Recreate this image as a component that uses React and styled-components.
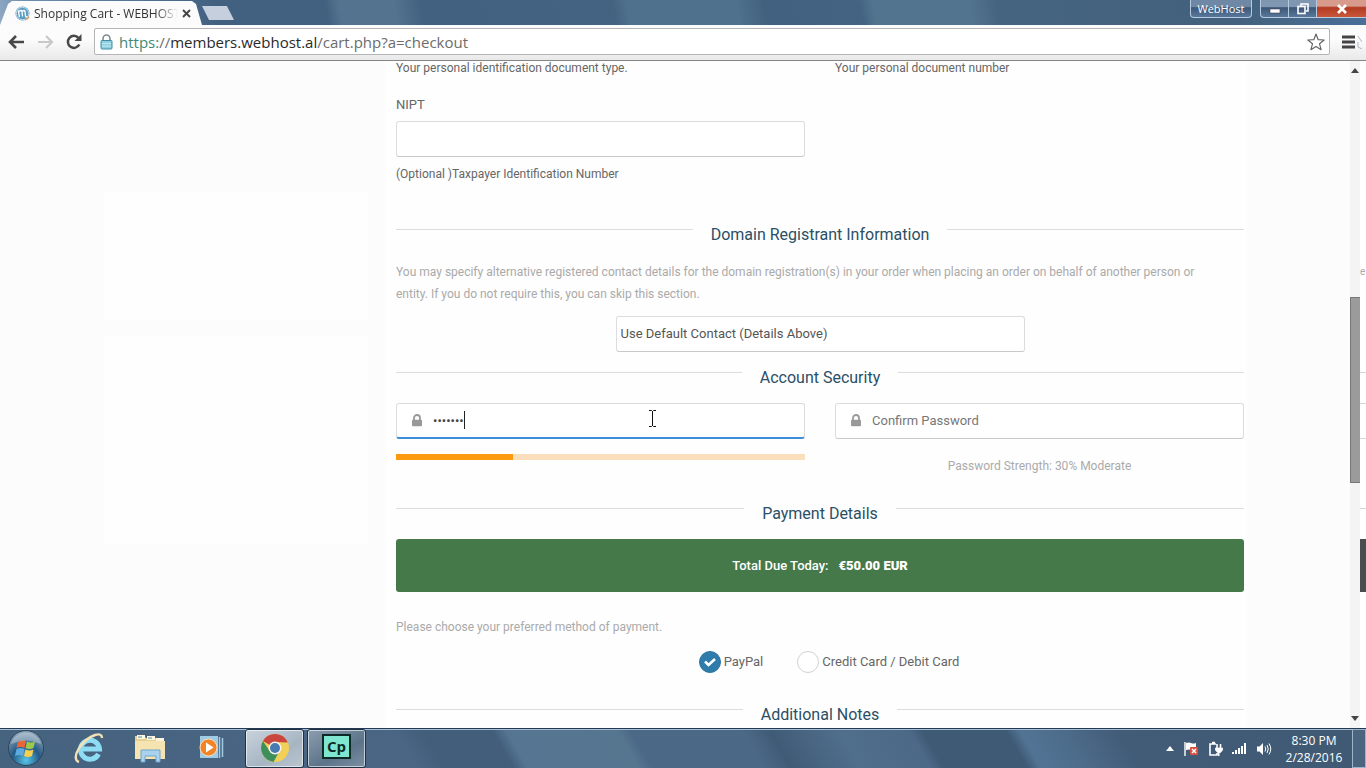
import React, { useState } from 'react';
import styled, { createGlobalStyle } from 'styled-components';

const GlobalStyle = createGlobalStyle`
  * {
    box-sizing: border-box;
  }
  body {
    margin: 0;
    background: #fcfcfc;
    font-family: Roboto, sans-serif;
    color: #666;
  }
  button, input, select {
    font-family: inherit;
  }
`

const Screen = styled.div`
  height: 100vh;
  display: flex;
  flex-direction: column;
  overflow: hidden;
`

/* browser frame */

const TitleBar = styled.div`
  height: 25px;
  flex: none;
  display: flex;
  align-items: flex-end;
  background: linear-gradient(80deg, #8fa9c4 0, #6f8fb0 2%, #426180 16%, #426180 24%, #53738f 25%, #53738f 29%, #426180 31%, #446382 45%, #4f718d 46%, #4f718d 54%, #426180 56%, #446382 63%, #53748f 64%, #53748f 71%, #45647f 73%, #43617d 90%, #4a7099 100%);
`

const Tab = styled.div`
  width: 202px;
  height: 24px;
  padding: 0 11px 0 15px;
  display: flex;
  align-items: center;
  gap: 4px;
  background: #fbfbfc;
  clip-path: polygon(0 100%, 8px 3px, 12px 0, 192px 0, 196px 3px, 100% 100%);
  font-family: 'Open Sans', sans-serif;
  font-size: 12px;
  color: #333;
`

const TabTitle = styled.span`
  flex: 1;
  min-width: 0;
  white-space: nowrap;
  mask-image: linear-gradient(90deg, #000 85%, transparent);
`

const PlainButton = styled.button`
  border: none;
  background: none;
  padding: 0;
  display: flex;
  align-items: center;
  justify-content: center;
  cursor: pointer;
`

const NewTab = styled(PlainButton)`
  width: 32px;
  height: 14px;
  margin-bottom: 5px;
  background: #c6cfde;
  clip-path: polygon(0 0, 78% 0, 100% 100%, 22% 100%);
`

const WindowButtons = styled.div`
  margin-left: auto;
  align-self: flex-start;
  display: flex;
`

const UserButton = styled(PlainButton)`
  width: 62px;
  height: 18px;
  margin-right: 8px;
  border: 1px solid #b7cbe0;
  border-top: none;
  border-radius: 0 0 4px 4px;
  background: linear-gradient(#6f88a5 40%, #3d5878 45%, #58779b);
  color: #fff;
  font-family: 'Open Sans', sans-serif;
  font-size: 11px;
`

const WindowButton = styled(PlainButton)`
  width: ${p => p.$close ? 50 : 28}px;
  height: 18px;
  border: 1px solid #b7cbe0;
  border-width: 0 0 1px 1px;
  border-radius: ${p => p.$first ? '0 0 0 4px' : 0};
  background: ${p => p.$close
    ? 'linear-gradient(#d79a8b 35%, #b23b22 45%, #c9583b)'
    : 'linear-gradient(#8097b1 40%, #3d5878 45%, #58779b)'};
`

const Toolbar = styled.div`
  height: 36px;
  flex: none;
  padding: 0 4px 2px 8px;
  display: flex;
  align-items: center;
  gap: 12px;
  background: linear-gradient(#fcfcfd 40%, #e9e9ea);
  border-bottom: 1px solid #858585;
`

const AddressBar = styled.div`
  flex: 1;
  height: 27px;
  padding: 0 4px 0 5px;
  display: flex;
  align-items: center;
  gap: 6px;
  background: #fff;
  border: 1px solid #b5b5b5;
  border-radius: 2px;
`

const Url = styled.a`
  flex: 1;
  font-family: 'Open Sans', sans-serif;
  font-size: 15px;
  color: #6c6c6c;
  text-decoration: none;

  span {
    color: #3d8a78;
  }
  b {
    font-weight: 400;
    color: #2a2a2a;
  }
`

/* page */

const Viewport = styled.div`
  flex: 1;
  min-height: 0;
  display: flex;
`

const Page = styled.div`
  flex: 1;
  display: grid;
  grid-template-columns: 264px minmax(0, 1fr);
  column-gap: 17px;
  padding: 0 103px 0 104px;
  overflow: hidden;
`

const Sidebar = styled.aside`
  padding-top: 131px;
  display: flex;
  flex-direction: column;
  gap: 16px;
`

const SidePanel = styled.div`
  height: ${p => p.$tall ? 208 : 128}px;
  background: #fefefe;
`

const Main = styled.main`
  padding: 0 3px 0 11px;
  background: #fefefe;
`

const Columns = styled.div`
  display: grid;
  grid-template-columns: 1fr 1fr;
  column-gap: 30px;
`

const Hint = styled.div`
  font-size: 12px;
  line-height: 14px;
`

const FieldGroup = styled.div`
  padding: 20px 0 41px;

  label {
    display: block;
    margin-bottom: 6px;
    font-size: 13px;
    line-height: 20px;
  }
  ${Hint} {
    margin-top: 10px;
  }
`

const TextInput = styled.input`
  display: block;
  width: 100%;
  height: 36px;
  border: 1px solid #dcdcdc;
  border-bottom-color: #c8c8c8;
  border-radius: 3px;
  background: #fff;
`

const SectionTitle = styled.h2`
  margin: 0;
  height: 24px;
  display: flex;
  gap: 18px;
  font-size: 16px;
  line-height: 26px;
  font-weight: 400;
  color: #2b4f66;

  &::before, &::after {
    content: '';
    flex: 1;
    height: 1px;
    margin-top: 7px;
    background: #dcdcdc;
  }
`

const Text = styled.p`
  margin: ${p => p.$top}px 0 0;
  padding-right: 20px;
  font-size: 12px;
  line-height: 22px;
  color: #aaa;
`

const ContactSelect = styled.select`
  display: block;
  width: calc(50% - 15px);
  height: 36px;
  margin: 11px auto 13px;
  padding: 0 4px 2px;
  appearance: none;
  border: 1px solid #dcdcdc;
  border-bottom-color: #c8c8c8;
  border-radius: 3px;
  background: #fff;
  color: #555;
  font-size: 13px;
`

const PasswordField = styled.label`
  height: 36px;
  padding: 0 14px 1px;
  display: flex;
  align-items: center;
  background: #fff;
  border: 1px solid #dcdcdc;
  border-bottom: ${p => p.$active ? '2px solid #3b8fd6' : '1px solid #c8c8c8'};
  border-radius: 3px;

  input {
    flex: ${p => p.$active ? 'none' : 1};
    field-sizing: content;
    min-width: 0;
    margin-left: 10px;
    padding: 0;
    border: none;
    outline: none;
    background: none;
    color: #444;
    font-size: 13px;
  }
  input::placeholder {
    color: #777;
  }
`

const Caret = styled.span`
  width: 1px;
  height: 18px;
  background: #222;
`

const Security = styled(Columns)`
  padding: 14px 0 27px;
`

const Meter = styled.div`
  height: 6px;
  margin-top: 15px;
  background: #fbdfbd;
`

const MeterFill = styled.div`
  height: 100%;
  background: #fc9a12;
`

const Strength = styled.div`
  margin-top: 19px;
  font-size: 12px;
  line-height: 16px;
  text-align: center;
  color: #aaa;
`

const Total = styled.div`
  height: 53px;
  margin-top: 14px;
  display: flex;
  align-items: center;
  justify-content: center;
  gap: 10px;
  background: #46794a;
  border-radius: 3px;
  color: #fff;
  font-size: 13px;
  font-weight: 500;

  strong {
    font-weight: 900;
  }
`

const Methods = styled.div`
  padding: 13px 0 29px 18px;
  display: flex;
  justify-content: center;
  gap: 34px;
`

const Method = styled.label`
  display: flex;
  align-items: center;
  gap: 3px;
  font-size: 13px;
  line-height: 22px;
`

const Radio = styled.input`
  appearance: none;
  width: 22px;
  height: 22px;
  margin: 0;
  border: 1px solid #d2d2d2;
  border-radius: 50%;
  background: #fff;

  &:checked {
    border-color: #2b76a3;
    background: #2f7cab url("data:image/svg+xml,%3Csvg xmlns='http://www.w3.org/2000/svg' viewBox='0 0 20 20'%3E%3Cpath d='M5 9.500l3.500 3.500 6.500-6' fill='none' stroke='white' stroke-width='2.600'/%3E%3C/svg%3E") center / 20px;
  }
`

const ScrollTrack = styled.div`
  width: 10px;
  display: flex;
  flex-direction: column;
  align-items: center;
  background: #f4f4f4;
`

const ScrollButton = styled(PlainButton)`
  height: 19px;
`

const ScrollThumb = styled.div`
  width: 10px;
  height: 186px;
  margin: 217px 0 auto;
  background: #9b9b9b;
  border: 1px solid #777;
  border-right: none;
`

const Edge = styled.div`
  width: 6px;
  padding-top: 203px;
  background: #fff;
`

const EdgeMark = styled.div`
  font-size: 10px;
  line-height: 16px;
  color: #aaa;
`

const EdgeBox = styled.div`
  height: ${p => p.$height}px;
  margin-top: ${p => p.$top || 0}px;
  border: solid #d6d6d6;
  border-width: 1px 0;
  ${p => p.$dark && 'background: #4a4d50; border-color: #4a4d50;'}
`

const EdgeLine = styled.div`
  height: 1px;
  margin-top: ${p => p.$top}px;
  background: #d6d6d6;
`

/* taskbar */

const Taskbar = styled.div`
  height: 40px;
  flex: none;
  display: flex;
  background: linear-gradient(60deg, #45627f 0, #4a6684 30%, #425e7a 32%, #425e7a 37%, #557592 38%, #56758f 46%, #4b6987 47%, #4b6987 55%, #405b76 57%, #506f8c 62%, #4c6988 67%, #3f5a75 68%, #3f5a75 74%, #527494 75%, #4d6c8b 78%, #425c78 82%, #405a74 100%);
  border-top: 1px solid #243a52;
  box-shadow: inset 0 1px #a9c1d8;
`

const AppButton = styled(PlainButton)`
  width: ${p => p.$width}px;
  padding-bottom: 2px;
  ${p => p.$active && `
    width: 59px;
    margin-right: 3px;
    border: 1px solid #1f3144;
    border-radius: 3px;
    box-shadow: inset 0 0 0 1px #ffffff99;
    background: ${p.$active};
  `}
`

const Tray = styled.div`
  margin-left: auto;
  padding-right: 4px;
  display: flex;
  align-items: center;
  gap: 9px;
`

const Clock = styled.time`
  width: 76px;
  align-self: center;
  text-align: center;
  color: #fff;
  font-family: 'Open Sans', sans-serif;
  font-size: 12px;
  line-height: 17px;
`

const ShowDesktop = styled(PlainButton)`
  width: 14px;
  height: 39px;
  border: 1px solid #9fb4c8;
  background: #4b6580;
`

const LockIcon = () => (
  <svg width="12" height="13" viewBox="0 0 12 13">
    <path d="M3 6V4a3 3 0 0 1 6 0v2" fill="none" stroke="#999" strokeWidth="1.8" />
    <rect x="1" y="5.800" width="10" height="6.500" rx="1" fill="#999" />
  </svg>
)

const Holder = styled.div`
  position: relative;
`

const TextCursor = styled.svg`
  position: absolute;
  left: 252px;
  top: 7px;
`

const Browser = () => (
  <>
    <TitleBar>
      <Tab>
        <svg width="15" height="15" viewBox="0 0 15 15">
          <circle cx="7.500" cy="7.500" r="7" fill="#5c9bc2" />
          <circle cx="7.500" cy="7.500" r="6.200" fill="none" stroke="#dbe9f2" strokeWidth="0.800" />
          <path d="M3.200 4.500L4.500 11M4 5.500q2.500-2 3 0L7.500 10.500M7 5.500q2.500-2 3 0L10.500 10q.5 1.500 2 .5" fill="none" stroke="#fff" strokeWidth="1.300" />
          <path d="M10 13.800q3-.5 4-3" fill="none" stroke="#dd9a55" strokeWidth="1.400" />
        </svg>
        <TabTitle>Shopping Cart - WEBHOST</TabTitle>
        <PlainButton aria-label="Close tab">
          <svg width="9" height="9" viewBox="0 0 9 9">
            <path d="M1 1l7 7M8 1L1 8" stroke="#444" strokeWidth="1.900" />
          </svg>
        </PlainButton>
      </Tab>
      <NewTab aria-label="New tab" />
      <WindowButtons>
        <UserButton>WebHost</UserButton>
        <WindowButton $first aria-label="Minimize">
          <svg width="12" height="12"><rect x="1" y="6" width="10" height="4" fill="#fff" stroke="#445" strokeWidth="0.600" /></svg>
        </WindowButton>
        <WindowButton aria-label="Restore">
          <svg width="12" height="12" viewBox="0 0 12 12" fill="none" stroke="#fff" strokeWidth="1.600">
            <path d="M4 3V1h7v7H9" />
            <rect x="1" y="3.500" width="7" height="7" />
          </svg>
        </WindowButton>
        <WindowButton $close aria-label="Close">
          <svg width="12" height="10" viewBox="0 0 12 10">
            <path d="M2 1l8 8M10 1L2 9" stroke="#fff" strokeWidth="2.600" />
          </svg>
        </WindowButton>
      </WindowButtons>
    </TitleBar>
    <Toolbar>
      <PlainButton aria-label="Back">
        <svg width="17" height="14" viewBox="0 0 17 14" fill="none" stroke="#484848" strokeWidth="2.600">
          <path d="M8 1L2 7l6 6M2 7h14" />
        </svg>
      </PlainButton>
      <PlainButton aria-label="Forward">
        <svg width="17" height="14" viewBox="0 0 17 14" fill="none" stroke="#c9c9c9" strokeWidth="2.200">
          <path d="M9 1l6 6-6 6M15 7H1" />
        </svg>
      </PlainButton>
      <PlainButton aria-label="Reload">
        <svg width="16" height="16" viewBox="0 0 16 16">
          <path d="M13.300 10.500A6 6 0 1 1 12.500 4" fill="none" stroke="#484848" strokeWidth="2.500" />
          <path d="M15.500 0v7H8.500z" fill="#484848" />
        </svg>
      </PlainButton>
      <AddressBar>
        <svg width="13" height="16" viewBox="0 0 13 16">
          <path d="M3 7V4.500a3.500 3.500 0 0 1 7 0V7" fill="none" stroke="#7d8b90" strokeWidth="1.600" />
          <rect x="1" y="6.500" width="11" height="8.500" rx="1" fill="#8fd0e0" stroke="#3f8ea5" />
          <path d="M2 9.500h9M2 12h9" stroke="#bfe8f0" />
        </svg>
        <Url href="#checkout"><span>https:</span>//<b>members.webhost.al</b>/cart.php?a=checkout</Url>
        <PlainButton aria-label="Bookmark">
          <svg width="18" height="18" viewBox="0 0 18 18">
            <path d="M9 1l2.200 5.700 6 .3-4.700 3.800 1.600 5.900L9 13.400l-5.100 3.300 1.600-5.900L.8 7l6-.3z" fill="#fff" stroke="#666" strokeWidth="1.200" strokeLinejoin="round" />
          </svg>
        </PlainButton>
      </AddressBar>
      <PlainButton aria-label="Menu">
        <svg width="20" height="14" viewBox="0 0 20 14">
          <path d="M0 2h13M0 7h13M0 12h13" stroke="#444" strokeWidth="3" />
          <path d="M16 1l4 6M16 7v5l4 2" fill="none" stroke="#9aa7b5" strokeWidth="0.800" />
        </svg>
      </PlainButton>
    </Toolbar>
  </>
)

const WindowsTaskbar = () => (
  <Taskbar>
    <AppButton $width={52} aria-label="Start">
      <svg width="38" height="38" viewBox="0 0 38 38">
        <defs>
          <radialGradient id="orb" cx="50%" cy="85%" r="80%">
            <stop offset="0" stopColor="#59c4e8" />
            <stop offset="0.500" stopColor="#245a86" />
            <stop offset="1" stopColor="#8ba3b8" />
          </radialGradient>
        </defs>
        <circle cx="19" cy="19" r="17.500" fill="url(#orb)" stroke="#2c4459" />
        <path d="M11 13q4-3 8-1l-1.500 7q-4-2-8 0z" fill="#e8673a" />
        <path d="M20 12.500q4 2 8 0L26.500 19q-4 2-8 0z" fill="#9cc94c" />
        <path d="M9.500 20q4-2 8 0L16 27q-4-2-8 0z" fill="#5ea9e0" />
        <path d="M18.500 20.500q4 2 8 0L25 27q-4 2-8 0z" fill="#f8cf4c" />
        <path d="M4 15a15.500 15.500 0 0 1 30 0Q19 8 4 15z" fill="#fff" opacity="0.300" />
      </svg>
    </AppButton>
    <AppButton $width={73} aria-label="Internet Explorer">
      <svg width="32" height="32" viewBox="0 0 32 32" fill="none">
        <path d="M25.500 22A9.500 9.500 0 1 1 26.500 17H10" stroke="#8edcf4" strokeWidth="5" />
        <path d="M6 30C-3 27 8 8 22 3q7-2 7 3" stroke="#f3e2b5" strokeWidth="2.400" />
      </svg>
    </AppButton>
    <AppButton $width={50} aria-label="Windows Explorer">
      <svg width="34" height="30" viewBox="0 0 34 30">
        <path d="M2 3h9l2 2h18v21H2z" fill="#e8cf94" />
        <path d="M4 2h8v4H4zM14 3h8v4h-8zM23 5h8v4h-8z" fill="#fff5db" />
        <path d="M5 4h4M15 5h4" stroke="#4c94b8" />
        <path d="M2 8h30v18H2z" fill="#f6e3b2" />
        <path d="M8 29V17h19v12h-4v-6H12v6z" fill="#a9d2ee" stroke="#6fa5cc" />
      </svg>
    </AppButton>
    <AppButton $width={70} aria-label="Media Player">
      <svg width="27" height="27" viewBox="0 0 27 27">
        <path d="M3 2h18v22H3z" fill="#9fcbe4" />
        <path d="M22.500 3v21M25.500 4v19" stroke="#9fcbe4" strokeWidth="1.500" />
        <circle cx="11.500" cy="13.500" r="8.500" fill="#f08427" stroke="#fbe0c0" />
        <path d="M9 8.500l7.500 5L9 18.500z" fill="#fff" />
      </svg>
    </AppButton>
    <AppButton $active="linear-gradient(150deg, #c9d3dd, #a7b5c3 60%, #bac5d0)" aria-label="Chrome">
      <svg width="30" height="30" viewBox="0 0 30 30">
        <circle cx="15" cy="15" r="14" fill="#f2cf57" />
        <path d="M15 15L2.900 8A14 14 0 0 1 27.800 9.500L15 9z" fill="#c9473f" />
        <path d="M2.900 8A14 14 0 0 0 13.500 28.900L19 19l-9-.5z" fill="#3f8f5c" />
        <circle cx="15" cy="15" r="6.500" fill="#f4f4f4" />
        <circle cx="15" cy="15" r="5" fill="#4a7bb0" />
      </svg>
    </AppButton>
    <AppButton $active="linear-gradient(150deg, #8c9eb0, #5c7389 60%, #7d90a3)" aria-label="Captivate">
      <svg width="29" height="28" viewBox="0 0 29 28">
        <rect x="1" y="1" width="27" height="23" fill="#7fe6cf" stroke="#0d2a26" strokeWidth="2" />
        <text x="14.500" y="18" textAnchor="middle" fontFamily="Open Sans, sans-serif" fontWeight="700" fontSize="15" fill="#0d2a26">Cp</text>
      </svg>
    </AppButton>
    <Tray>
      <svg width="8" height="5" viewBox="0 0 8 5"><path d="M4 0l4 5H0z" fill="#fff" /></svg>
      <svg width="16" height="16" viewBox="0 0 16 16">
        <path d="M2 1v14" stroke="#fff" strokeWidth="1.400" />
        <path d="M3 2q3-1 5 0t5 0v7q-3 1-5 0t-5 0z" fill="#fff" />
        <rect x="7" y="6" width="8" height="8" rx="1" fill="#d8503f" />
        <path d="M9 8l4 4M13 8l-4 4" stroke="#fff" strokeWidth="1.500" />
      </svg>
      <svg width="15" height="16" viewBox="0 0 15 16" fill="none" stroke="#fff" strokeWidth="1.600">
        <path d="M8 3H2v11h7v-2M4 1.500h3" />
        <path d="M9 3v4M12.500 3v4M10.700 11v4" />
        <path d="M7.500 7h7v2l-2 2.500h-3L7.500 9z" fill="#fff" strokeWidth="0.800" />
      </svg>
      <svg width="15" height="13" viewBox="0 0 15 13" fill="#fff">
        <path d="M0 10h2v2H0zM3 8h2v4H3zM6 6h2v6H6zM9 4h2v8H9zM12 1h2v11h-2z" />
      </svg>
      <svg width="16" height="14" viewBox="0 0 16 14">
        <path d="M1 4.500h2.500L7 1v12L3.500 9.500H1z" fill="#fff" />
        <path d="M9 4.500q1.500 2.500 0 5M11 3q2.500 4 0 8M13 1.500q3.500 5.500 0 11" fill="none" stroke="#fff" />
      </svg>
    </Tray>
    <Clock>8:30 PM<br />2/28/2016</Clock>
    <ShowDesktop aria-label="Show desktop" />
  </Taskbar>
)

export default function App() {
  const [password, setPassword] = useState('members')
  const [method, setMethod] = useState('paypal')
  const strength = 30

  return (
    <Screen>
      <GlobalStyle />
      <Browser />
      <Viewport>
        <Page>
          <Sidebar>
            <SidePanel />
            <SidePanel $tall />
          </Sidebar>
          <Main>
            <Columns>
              <Hint>Your personal identification document type.</Hint>
              <Hint>Your personal document number</Hint>
            </Columns>
            <Columns>
              <FieldGroup>
                <label htmlFor="nipt">NIPT</label>
                <TextInput id="nipt" />
                <Hint>(Optional )Taxpayer Identification Number</Hint>
              </FieldGroup>
            </Columns>

            <SectionTitle>Domain Registrant Information</SectionTitle>
            <Text $top={15}>
              You may specify alternative registered contact details for the domain registration(s) in your order when placing an order on behalf of another person or entity. If you do not require this, you can skip this section.
            </Text>
            <ContactSelect aria-label="Registrant contact">
              <option>Use Default Contact (Details Above)</option>
            </ContactSelect>

            <SectionTitle>Account Security</SectionTitle>
            <Security>
              <Holder>
                <PasswordField $active>
                  <LockIcon />
                  <input type="password" aria-label="Password" value={password} onChange={e => setPassword(e.target.value)} />
                  <Caret />
                </PasswordField>
                <TextCursor width="9" height="17" viewBox="0 0 9 17">
                  <path d="M1 .5h2.500l1 1 1-1H8M1 16.500h2.500l1-1 1 1H8M4.500 1v15" fill="none" stroke="#111" />
                </TextCursor>
                <Meter>
                  <MeterFill style={{ width: `${strength - 1.5}%` }} />
                </Meter>
              </Holder>
              <div>
                <PasswordField>
                  <LockIcon />
                  <input type="password" aria-label="Confirm Password" placeholder="Confirm Password" />
                </PasswordField>
                <Strength>Password Strength: {strength}% Moderate</Strength>
              </div>
            </Security>

            <SectionTitle>Payment Details</SectionTitle>
            <Total>
              <span>Total Due Today:</span>
              <strong>€50.00 EUR</strong>
            </Total>
            <Text $top={24}>Please choose your preferred method of payment.</Text>
            <Methods>
              <Method>
                <Radio type="radio" name="method" checked={method === 'paypal'} onChange={() => setMethod('paypal')} />
                PayPal
              </Method>
              <Method>
                <Radio type="radio" name="method" checked={method === 'card'} onChange={() => setMethod('card')} />
                Credit Card / Debit Card
              </Method>
            </Methods>

            <SectionTitle>Additional Notes</SectionTitle>
          </Main>
        </Page>
        <ScrollTrack>
          <ScrollButton aria-label="Scroll up">
            <svg width="8" height="5" viewBox="0 0 8 5"><path d="M4 0l4 5H0z" fill="#444" /></svg>
          </ScrollButton>
          <ScrollThumb />
          <ScrollButton aria-label="Scroll down">
            <svg width="8" height="5" viewBox="0 0 8 5"><path d="M0 0h8L4 5z" fill="#444" /></svg>
          </ScrollButton>
        </ScrollTrack>
        <Edge>
          <EdgeMark>e</EdgeMark>
          <EdgeLine $top={92} />
          <EdgeBox $top={30} $height={36} />
          <EdgeLine $top={69} />
          <EdgeBox $top={30} $height={53} $dark />
        </Edge>
      </Viewport>
      <WindowsTaskbar />
    </Screen>
  )
}
